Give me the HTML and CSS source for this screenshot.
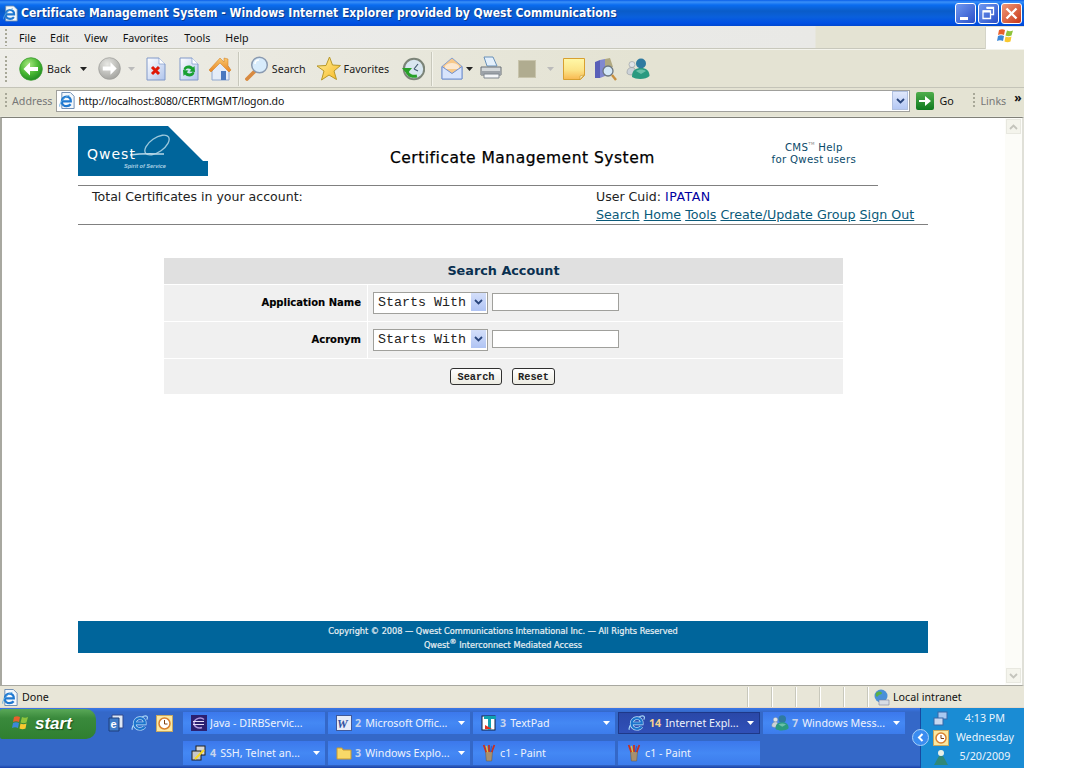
FILE: index.html
```html
<!DOCTYPE html>
<html lang="en">
<head>
<meta charset="utf-8">
<title>Certificate Management System</title>
<link rel="stylesheet" href="styles.css">
</head>
<body>
<svg class="defs" width="0" height="0" aria-hidden="true">
  <defs>
    <radialGradient id="gGreen" cx=".4" cy=".3" r=".8"><stop offset="0" stop-color="#a8e880"/><stop offset=".55" stop-color="#45b530"/><stop offset="1" stop-color="#15801f"/></radialGradient>
    <radialGradient id="gGrey" cx=".4" cy=".3" r=".8"><stop offset="0" stop-color="#e8e8e4"/><stop offset="1" stop-color="#9c9c98"/></radialGradient>
    <linearGradient id="gPage" x1="0" y1="0" x2="1" y2="1"><stop offset="0" stop-color="#fff"/><stop offset="1" stop-color="#b0c4ec"/></linearGradient>
    <linearGradient id="gNote" x1="0" y1="0" x2="0" y2="1"><stop offset="0" stop-color="#fff8a8"/><stop offset=".55" stop-color="#fce488"/><stop offset="1" stop-color="#f8b850"/></linearGradient>
    <linearGradient id="gGo" x1="0" y1="0" x2="0" y2="1"><stop offset="0" stop-color="#4fae4c"/><stop offset="1" stop-color="#0f7a1f"/></linearGradient>
    <linearGradient id="gStar" x1="0" y1="0" x2="1" y2="1"><stop offset="0" stop-color="#fff0a0"/><stop offset="1" stop-color="#f8b820"/></linearGradient>
    <linearGradient id="gRoof" x1="0" y1="0" x2="0" y2="1"><stop offset="0" stop-color="#f8c870"/><stop offset="1" stop-color="#e88420"/></linearGradient>
    <symbol id="ie" viewBox="0 0 20 20">
      <path d="M1.500 17.500C0 14.500 6 5.500 14 2.500c3.500-1.300 5.300.7 3.500 3.700" fill="none" stroke="#a8d8f8" stroke-width="1.300"/>
      <path d="M4.500 10.500h10.800c.2-3.500-2-6-5.300-6-3.300 0-6 2.700-6 6.200s2.700 5.800 6 5.800c2.300 0 4-.9 5-2.500" fill="none" stroke="#c4e6fc" stroke-width="3.900"/>
      <path d="M4.500 10.500h10.800c.2-3.500-2-6-5.300-6-3.300 0-6 2.700-6 6.200s2.700 5.800 6 5.800c2.300 0 4-.9 5-2.500" fill="none" stroke="#1c74cc" stroke-width="2.500"/>
    </symbol>
    <symbol id="iepage" viewBox="0 0 18 18">
      <path d="M3 .5h9l4 4v13H3z" fill="#f4f8fc" stroke="#6888b0"/>
      <path d="M3 10h9.500c.2-3-1.700-5-4.500-5-2.900 0-5 2.300-5 5.200S5.100 15 8 15c2 0 3.300-.7 4.300-2" fill="none" stroke="#1f78d0" stroke-width="2.400"/>
      <path d="M.8 15.500C0 13 4 6 11 3.500" fill="none" stroke="#5ca8e0"/>
    </symbol>
    <symbol id="msgr" viewBox="0 0 24 24">
      <circle cx="6" cy="7.500" r="3" fill="#e0e4e8" stroke="#808890" stroke-width=".5"/><path d="M1 16c0-4 2-5.500 5-5.500 1.500 0 3 1 3 1.500l-3 6c-3 0-5-1-5-2z" fill="#ccd2d8" stroke="#808890" stroke-width=".5"/>
      <circle cx="15" cy="6.500" r="5" fill="#2f7aa0"/><path d="M6 20c0-7 4-9 9-9s8.500 2.500 8.500 8c-3 3.500-13 4-17.500 1z" fill="#2a9a80"/><path d="M10 14c3-2 7-2 10 0l-5 3z" fill="#6ac0a8"/>
    </symbol>
    <symbol id="paint" viewBox="0 0 18 20">
      <path d="M5 8h8l-1 11H6z" fill="#a89070" stroke="#6a5a40" stroke-width=".6"/>
      <path d="M6 9 3 1M9 9V1M12 9l3-8" stroke="#c83020" stroke-width="2"/><path d="M7.500 9 6 2" stroke="#e8c030" stroke-width="1.500"/><path d="M10.500 9 12 2" stroke="#3060c8" stroke-width="1.500"/>
    </symbol>
    <symbol id="arrowDown" viewBox="0 0 7 4"><path d="M0 0h7L3.500 4z" fill="currentColor"/></symbol>
  </defs>
</svg>

<div class="window">
  <header class="titlebar">
    <svg class="title-icon" width="16" height="17"><use href="#iepage"/></svg>
    <h1 class="title-text">Certificate Management System - Windows Internet Explorer provided by Qwest Communications</h1>
    <div class="win-buttons">
      <span class="win-btn"><svg width="21" height="21" viewBox="0 0 21 21"><rect x="5" y="14" width="8" height="3" fill="#fff"/></svg></span>
      <span class="win-btn"><svg width="21" height="21" viewBox="0 0 21 21"><path d="M8.500 4.500h7v7h-2.500M5 8h7.500v7.500H5z" fill="none" stroke="#fff" stroke-width="1.300"/><path d="M8.500 5h7M5 8.500h7.500" stroke="#fff" stroke-width="1.800"/></svg></span>
      <span class="win-btn win-close"><svg width="21" height="21" viewBox="0 0 21 21"><path d="M5.500 5.500l10 10M15.500 5.500l-10 10" stroke="#fff" stroke-width="2.400"/></svg></span>
    </div>
  </header>

  <nav class="menubar">
    <span class="grip"></span>
    <span class="menu-item m-file">File</span>
    <span class="menu-item m-edit">Edit</span>
    <span class="menu-item m-view">View</span>
    <span class="menu-item m-fav">Favorites</span>
    <span class="menu-item m-tools">Tools</span>
    <span class="menu-item">Help</span>
    <span class="flag">
      <svg width="20" height="20" viewBox="0 0 20 20">
        <path d="M3 7c2-1 4-1 6 0l1-5C8 1 6 1 4 2z" fill="#e8602c"/>
        <path d="M10.500 7.500c2 1 4 1 6 0l1.500-5c-2 1-4 1-6 0z" fill="#8fc43c"/>
        <path d="M2 13c2-1 4-1 6 0l1-5C7 7 5 7 3 8z" fill="#3c88d8"/>
        <path d="M9.500 13.500c2 1 4 1 6 0l1-5c-2 1-4 1-6 0z" fill="#f8c830"/>
      </svg>
    </span>
  </nav>

  <div class="toolbar">
    <span class="grip tall"></span>
    <svg class="t-back" width="24" height="24" viewBox="0 0 24 24"><circle cx="12" cy="12" r="11.300" fill="url(#gGreen)" stroke="#3c9a30" stroke-width=".8"/><path d="M4.500 12l6.500-6.500V10h8v4h-8v4.500z" fill="#fff"/></svg>
    <span class="t-label t-l-back">Back</span>
    <svg class="t-drop d-back" width="7" height="4"><use href="#arrowDown"/></svg>
    <svg class="t-fwd" width="23" height="23" viewBox="0 0 24 24"><circle cx="12" cy="12" r="11.300" fill="url(#gGrey)" stroke="#a0a09c" stroke-width=".8"/><path d="M19.500 12 13 5.500V10H5v4h8v4.500z" fill="#fff"/></svg>
    <svg class="t-drop d-fwd off" width="7" height="4"><use href="#arrowDown"/></svg>
    <svg class="t-stop" width="20" height="24" viewBox="0 0 20 24"><path d="M1 1h12l6 6v16H1z" fill="url(#gPage)" stroke="#8098c8"/><path d="M13 1v6h6" fill="#fff" stroke="#8098c8" stroke-width=".7"/><path d="M6 10l7 7M13 10l-7 7" stroke="#e01808" stroke-width="3"/></svg>
    <svg class="t-refresh" width="20" height="24" viewBox="0 0 20 24"><path d="M1 1h12l6 6v16H1z" fill="url(#gPage)" stroke="#8098c8"/><path d="M13 1v6h6" fill="#fff" stroke="#8098c8" stroke-width=".7"/><path d="M4.500 12.500C5 8.500 11 7 14 10.500l1.500-1.500.5 6-5.500-.5 1.700-1.700C10.500 11.300 8 11 6.500 13z" fill="#18a030"/><path d="M15.500 15.500C15 19.500 9 21 6 17.500L4.500 19 4 13l5.500.5-1.700 1.700C9.500 16.700 12 17 13.500 15z" fill="#18a030"/></svg>
    <svg class="t-home" width="24" height="25" viewBox="0 0 24 25"><path d="M4 12v12h17V11L12 4z" fill="#e4ecf8" stroke="#90a8d0"/><rect x="13" y="15" width="5" height="9" fill="#4878c0"/><path d="M1 14 12 2l4 4V2l4 1v7l3 4-2 2L12 7 3 16z" fill="url(#gRoof)" stroke="#d07818" stroke-width=".5"/></svg>
    <span class="t-sep s-1"></span>
    <svg class="t-search" width="24" height="25" viewBox="0 0 24 25"><path d="M9.500 15.500 2 23" stroke="#d88a40" stroke-width="3.800" stroke-linecap="round"/><circle cx="14.500" cy="9" r="7.800" fill="#d8ecfc" stroke="#8a9ab0" stroke-width="1.500"/><path d="M10 8c0-3 2-4 4-4" stroke="#fff" stroke-width="1.500" fill="none"/></svg>
    <span class="t-label t-l-search">Search</span>
    <svg class="t-star" width="25" height="25" viewBox="0 0 25 25"><path d="M13.500 1l3 8 8 .5-6.500 5.500 2.500 8.500-7.500-4.500-7.500 5 2.500-9L1 10l9-.5z" fill="url(#gStar)" stroke="#b89828"/></svg>
    <span class="t-label t-l-fav">Favorites</span>
    <svg class="t-hist" width="24" height="24" viewBox="0 0 24 24"><circle cx="13" cy="12" r="10.200" fill="#d8e6f0" stroke="#7c8478" stroke-width="2"/><path d="M13 12l4-5M13 12l4 2" stroke="#405870" stroke-width="1.200" fill="none"/><path d="M1 11h10l-5 6z" fill="#28a028"/><path d="M6 14c1 5 6 6 10 5" stroke="#28a028" stroke-width="3" fill="none"/></svg>
    <span class="t-sep s-2"></span>
    <svg class="t-mail" width="22" height="23" viewBox="0 0 22 23"><path d="M1 9.500 11 1l10 8.500V22H1z" fill="#f8c888" stroke="#88a0d0"/><path d="M4 9c3-4 11-4 14 0v3H4z" fill="#fce8d0"/><path d="M1 22V9.500l10 7 10-7V22z" fill="#d8e4fc" stroke="#7090d0"/></svg>
    <svg class="t-drop d-mail" width="7" height="4"><use href="#arrowDown"/></svg>
    <svg class="t-print" width="24" height="25" viewBox="0 0 24 25"><path d="M5 1h9l4 9H8z" fill="#e4f0fc" stroke="#6890b8"/><path d="M2 11h20v8H2z" fill="#d4d8da" stroke="#686e74"/><path d="M2 15h20v4H2z" fill="#9ca2a8"/><path d="M5 18h15v4H5z" fill="#f4f6f8" stroke="#808890"/></svg>
    <span class="t-square"></span>
    <svg class="t-drop d-square off" width="7" height="4"><use href="#arrowDown"/></svg>
    <svg class="t-note" width="22" height="22" viewBox="0 0 22 22"><path d="M.5.500h21v17l-4 4H.5z" fill="url(#gNote)" stroke="#d8a030"/><path d="M21 17l-4 1v3.500z" fill="#f8f0c0" stroke="#c89830" stroke-width=".6"/></svg>
    <svg class="t-research" width="23" height="24" viewBox="0 0 23 24"><path d="M1 5l5-2v18H1z" fill="#5a60b8"/><path d="M6 3l5-1v17l-5 2z" fill="#8088d0"/><path d="M11 2l5-1 3 9h-8z" fill="#b0a880"/><circle cx="14" cy="14" r="5" fill="#d4e8f8" stroke="#6c7680" stroke-width="1.300"/><path d="m18 18 4 5" stroke="#c89040" stroke-width="2.400"/></svg>
    <svg class="t-msgr" width="24" height="24"><use href="#msgr"/></svg>
  </div>

  <div class="addressbar">
    <span class="grip short"></span>
    <span class="addr-label">Address</span>
    <div class="addr-field">
      <svg width="17" height="17"><use href="#iepage"/></svg>
      <span class="addr-url">http://localhost:8080/CERTMGMT/logon.do</span>
      <span class="addr-drop"><svg width="9" height="6" viewBox="0 0 9 6"><path d="M1 1l3.500 3.500L8 1" fill="none" stroke="#29457c" stroke-width="1.800"/></svg></span>
    </div>
    <svg class="go-icon" width="18" height="18" viewBox="0 0 18 18"><rect width="18" height="18" rx="2" fill="url(#gGo)"/><path d="M3 8h6V4l6 5-6 5v-4H3z" fill="#fff"/></svg>
    <span class="go-label">Go</span>
    <span class="grip short g-links"></span>
    <span class="links-label">Links</span>
    <span class="chevrons">»</span>
  </div>

  <div class="viewport-wrap">
    <main class="viewport">
      <div class="page">
        <div class="head">
          <div class="logo">
            <svg width="130" height="50" viewBox="0 0 130 50">
              <path d="M0 0h90l35 35h5v15H0z" fill="#00659b"/>
              <ellipse cx="79" cy="19" rx="14" ry="7" transform="rotate(-35 79 19)" fill="none" stroke="#9cc8dc" stroke-width="1.300"/>
              <path d="M52 29c14-2 24-1 34-1" stroke="#b8d8e8" stroke-width="1.500" fill="none"/>
              <text x="9" y="33" class="logo-name">Qwest</text>
              <text x="46" y="42" class="logo-tag">Spirit of Service</text>
            </svg>
          </div>
          <h2 class="app-title">Certificate Management System</h2>
          <div class="help-link">CMS<sup class="tm">TM</sup> Help<br>for Qwest users</div>
        </div>
        <hr class="rule rule-short">
        <div class="info">
          <div class="info-left">Total Certificates in your account:</div>
          <div class="info-right">
            <div class="user-line">User Cuid: <span class="user-id">IPATAN</span></div>
            <div class="nav-links"><a href="#">Search</a> <a href="#">Home</a> <a href="#">Tools</a> <a href="#">Create/Update Group</a> <a href="#">Sign Out</a></div>
          </div>
        </div>
        <hr class="rule rule-long">

        <form class="search">
          <div class="search-title"><span>Search Account</span></div>
          <div class="search-row">
            <label class="row-label">Application Name</label>
            <div class="row-fields">
              <span class="sel"><select><option>Starts With</option></select><span class="sel-arrow"><svg width="9" height="6" viewBox="0 0 9 6"><path d="M1 1l3.500 3.500L8 1" fill="none" stroke="#29457c" stroke-width="1.800"/></svg></span></span>
              <input type="text">
            </div>
          </div>
          <div class="search-row">
            <label class="row-label">Acronym</label>
            <div class="row-fields">
              <span class="sel"><select><option>Starts With</option></select><span class="sel-arrow"><svg width="9" height="6" viewBox="0 0 9 6"><path d="M1 1l3.500 3.500L8 1" fill="none" stroke="#29457c" stroke-width="1.800"/></svg></span></span>
              <input type="text">
            </div>
          </div>
          <div class="search-actions">
            <button type="button" class="btn-search">Search</button>
            <button type="button" class="btn-reset">Reset</button>
          </div>
        </form>

        <footer class="foot">
          <div>Copyright © 2008 — Qwest Communications International Inc. — All Rights Reserved</div>
          <div>Qwest<sup>®</sup> Interconnect Mediated Access</div>
        </footer>
      </div>
    </main>
    <div class="scrollbar">
      <span class="sb-btn"><svg width="9" height="6" viewBox="0 0 9 6"><path d="M1 5l3.500-3.500L8 5" fill="none" stroke="#c4c4bc" stroke-width="1.800"/></svg></span>
      <span class="sb-btn"><svg width="9" height="6" viewBox="0 0 9 6"><path d="M1 1l3.500 3.500L8 1" fill="none" stroke="#c4c4bc" stroke-width="1.800"/></svg></span>
    </div>
  </div>

  <div class="statusbar">
    <svg width="17" height="17"><use href="#iepage"/></svg>
    <span class="status-text">Done</span>
    <span class="pane p1"></span><span class="pane"></span><span class="pane"></span><span class="pane"></span><span class="pane"></span>
    <span class="pane zone">
      <svg width="17" height="17" viewBox="0 0 17 17"><circle cx="8" cy="7" r="6.500" fill="#4a90d8"/><path d="M3 4c2-2 5-2 6 0 0 2-3 1-4 3S2 7 3 4z" fill="#58b048"/><path d="M6 11h10v5H6z" fill="#d8dce4" stroke="#7880a0" stroke-width=".6"/></svg>
      <span>Local intranet</span>
    </span>
  </div>

  <div class="taskbar">
    <div class="start">
      <svg width="20" height="20" viewBox="0 0 20 20">
        <path d="M2 8c2-1 4-1 6 0l1-5C7 2 5 2 3 3z" fill="#e8602c"/>
        <path d="M9.500 8.500c2 1 4 1 6 0L17 3c-2 1-4 1-6 0z" fill="#8fc43c"/>
        <path d="M1 14c2-1 4-1 6 0l1-5C6 8 4 8 2 9z" fill="#3c88d8"/>
        <path d="M8.500 14.500c2 1 4 1 6 0l1-5c-2 1-4 1-6 0z" fill="#f8c830"/>
      </svg>
      <span class="start-text">start</span>
    </div>
    <div class="quick">
      <svg width="16" height="18" viewBox="0 0 16 18"><path d="M4 1h11v13H4z" fill="#dfe8f4" stroke="#30488c"/><path d="M1 4h10v13H1z" fill="#3f7cc8" stroke="#1f3f7c"/><text x="2.500" y="14" class="q-e">e</text></svg>
      <svg width="18" height="18"><use href="#ie"/></svg>
      <svg width="17" height="17" viewBox="0 0 17 17"><rect x=".5" y=".5" width="16" height="16" fill="#fce8a0" stroke="#c8a860"/><circle cx="8.500" cy="8.500" r="5.500" fill="#fff" stroke="#d88030" stroke-width="1.500"/><path d="M8.500 5v4h3" stroke="#804010" fill="none"/></svg>
    </div>
    <div class="tasks">
      <div class="task">
        <svg width="16" height="16" viewBox="0 0 16 16"><rect width="16" height="16" fill="#2c2070"/><path d="M13 4.500C10 2 4 3 3 7.500c-.5 4 4 6.500 8 5" fill="none" stroke="#b098e0" stroke-width="1.500"/><path d="M2 6.500h11M2 9.500h11" stroke="#e8e0f8"/></svg>
        <span class="task-text">Java - DIRBServic...</span>
      </div>
      <div class="task">
        <svg width="16" height="16" viewBox="0 0 16 16"><rect x=".5" y=".5" width="15" height="15" fill="#e8ecf8" stroke="#405898"/><text x="1" y="13" class="w-letter">W</text></svg>
        <span class="task-num">2</span><span class="task-text">Microsoft Offic...</span><svg class="task-drop" width="7" height="4"><use href="#arrowDown"/></svg>
      </div>
      <div class="task">
        <svg width="16" height="16" viewBox="0 0 16 16"><rect x="1" y="1" width="13" height="14" fill="#fff" stroke="#102040"/><path d="M3 1h12v3H10v11H7V4H3z" fill="#10a0b0"/><path d="M4 10l7 4H4z" fill="#e03020"/></svg>
        <span class="task-num">3</span><span class="task-text">TextPad</span><svg class="task-drop" width="7" height="4"><use href="#arrowDown"/></svg>
      </div>
      <div class="task active">
        <svg width="18" height="18"><use href="#ie"/></svg>
        <span class="task-num hot">14</span><span class="task-text">Internet Expl...</span><svg class="task-drop" width="7" height="4"><use href="#arrowDown"/></svg>
      </div>
      <div class="task">
        <svg width="18" height="18"><use href="#msgr"/></svg>
        <span class="task-num">7</span><span class="task-text">Windows Mess...</span><svg class="task-drop" width="7" height="4"><use href="#arrowDown"/></svg>
      </div>
      <div class="task">
        <svg width="16" height="16" viewBox="0 0 16 16"><rect x="5" y="1" width="9" height="9" fill="#d8d8d8" stroke="#202020"/><rect x="1" y="6" width="9" height="9" fill="#c8c8c8" stroke="#202020"/><path d="M4 14 13 5" stroke="#f8d820" stroke-width="2"/></svg>
        <span class="task-num">4</span><span class="task-text">SSH, Telnet an...</span><svg class="task-drop" width="7" height="4"><use href="#arrowDown"/></svg>
      </div>
      <div class="task">
        <svg width="16" height="14" viewBox="0 0 16 14"><path d="M1 2h5l1 2h8v9H1z" fill="#f8d868" stroke="#c89830"/></svg>
        <span class="task-num">3</span><span class="task-text">Windows Explo...</span><svg class="task-drop" width="7" height="4"><use href="#arrowDown"/></svg>
      </div>
      <div class="task">
        <svg width="16" height="18"><use href="#paint"/></svg>
        <span class="task-text">c1 - Paint</span>
      </div>
      <div class="task">
        <svg width="16" height="18"><use href="#paint"/></svg>
        <span class="task-text">c1 - Paint</span>
      </div>
    </div>
    <div class="tray">
      <span class="tray-chevron"><svg width="9" height="9" viewBox="0 0 9 9"><path d="M6.500 1 3 4.500 6.500 8" fill="none" stroke="#fff" stroke-width="2"/></svg></span>
      <div class="tray-icons">
        <svg width="16" height="16" viewBox="0 0 16 16"><rect x="5" y="1" width="9" height="7" fill="#a8c8f0" stroke="#3868a8"/><rect x="1" y="7" width="9" height="7" fill="#c8d8f0" stroke="#3868a8"/></svg>
        <svg width="16" height="16" viewBox="0 0 16 16"><rect x=".5" y=".5" width="15" height="15" fill="#fce8a0" stroke="#c8a860"/><circle cx="8" cy="8" r="5" fill="#fff" stroke="#d88030" stroke-width="1.500"/><path d="M8 5v3.500h3" stroke="#804010" fill="none"/></svg>
        <svg width="16" height="16" viewBox="0 0 16 16"><circle cx="8" cy="4" r="3" fill="#e8f0e8"/><path d="M1 16 6 7h4l5 9z" fill="#308878"/></svg>
      </div>
      <div class="tray-clock">
        <span>4:13 PM</span>
        <span>Wednesday</span>
        <span>5/20/2009</span>
      </div>
    </div>
  </div>
</div>
</body>
</html>
```
FILE: styles.css
```css
* { box-sizing: border-box; }
html, body { margin: 0; padding: 0; background: #fff; }
body { width: 1076px; height: 768px; overflow: hidden; font-family: "Noto Sans", "Liberation Sans", sans-serif; }
.defs { display: block; height: 0; }
.window { width: 1024px; height: 768px; display: flex; flex-direction: column; background: #e6e4d6; }

/* Title bar */
.titlebar {
  height: 26px; display: flex; align-items: center; padding: 0 2px 0 3px;
  background: linear-gradient(180deg, #0a5ee8 0, #3a90f8 2px, #0a6cf0 5px, #0a5cc8 11px, #0a60dc 17px, #0050e4 23px, #0048d0 26px);
}
.title-icon { flex: none; }
.title-text { margin: 0 0 0 2px; font: 700 12px "DejaVu Sans Condensed", "DejaVu Sans", sans-serif; font-stretch: condensed; letter-spacing: .02px; color: #fff; text-shadow: 1px 1px 0 #0a3a90; white-space: nowrap; flex: 1; }
.win-buttons { display: flex; gap: 2px; }
.win-btn { width: 21px; height: 21px; border: 1px solid #fff; border-radius: 3px; background: linear-gradient(135deg, #7098f0, #2a50c8); display: flex; align-items: center; justify-content: center; }
.win-btn svg { margin: -1px; flex: none; }
.win-close { background: linear-gradient(135deg, #f09878, #c83818); }

/* Menu bar */
.menubar {
  height: 23px; display: flex; align-items: center; font-size: 10.700px; color: #111;
  background: linear-gradient(90deg, #ececea 0, #e9e9e6 815px, #e4e3d3 816px);
  border-bottom: 1px solid #c8c8bc; padding-left: 5px; padding-top: 1px;
}
.grip { width: 2px; height: 17px; margin-right: 12px; background: repeating-linear-gradient(180deg, #a8a898 0 2px, transparent 2px 4px); flex: none; }
.grip.tall { height: 26px; margin-right: 12px; }
.grip.short { height: 16px; margin-right: 5px; }
.menu-item { margin-right: 15px; }
.m-file { margin-right: 14px; }
.m-edit { margin-right: 15px; }
.m-view { margin-right: 15px; }
.m-fav { margin-right: 16px; }
.flag { margin-left: auto; width: 39px; height: 22px; background: #fff; border-left: 1px solid #d4d4c8; display: flex; align-items: center; justify-content: center; }

/* Toolbar */
.toolbar { height: 39px; display: flex; align-items: center; font-size: 10.700px; color: #222; background: linear-gradient(90deg, #eeede8 0, #e8e7dc 400px, #e4e3d3 640px); border-top: 1px solid #f4f4ec; border-bottom: 1px solid #c4c4b8; padding-left: 5px; }
.toolbar > svg { flex: none; }
.t-label { white-space: nowrap; }
.t-l-back { margin-left: 4px; }
.t-drop { color: #222; }
.t-drop.off { color: #bbb; }
.d-back { margin-left: 9px; }
.t-fwd { margin-left: 11px; }
.d-fwd { margin-left: 7px; }
.t-stop { margin-left: 11px; }
.t-refresh { margin-left: 13px; }
.t-home { margin-left: 9px; }
.t-sep { width: 1px; height: 34px; background: #c8c8bc; box-shadow: 1px 0 0 #f4f4ec; flex: none; }
.s-1 { margin-left: 6px; }
.t-search { margin-left: 6px; }
.t-l-search { margin-left: 3px; }
.t-star { margin-left: 10px; }
.t-l-fav { margin-left: 3px; }
.t-hist { margin-left: 12px; }
.s-2 { margin-left: 6px; }
.t-mail { margin-left: 9px; }
.d-mail { margin-left: 3px; }
.t-print { margin-left: 6px; }
.t-square { width: 18px; height: 18px; margin-left: 15px; background: #b0ac90; border: 1px solid #c8c4ac; flex: none; }
.d-square { margin-left: 11px; }
.t-note { margin-left: 9px; }
.t-research { margin-left: 9px; }
.t-msgr { margin-left: 9px; }

/* Address bar */
.addressbar { height: 29px; display: flex; align-items: center; font-size: 10.700px; background: #e4e3d3; padding: 0 0 3px 5px; border-bottom: 1px solid #e8e8dc; }
.addr-label { color: #777; margin-right: 4px; }
.addr-field { width: 854px; height: 22px; display: flex; align-items: center; background: #fff; border: 1px solid #a0a09c; padding-left: 2px; color: #111; }
.addr-field > svg { flex: none; }
.addr-url { margin-left: 2px; flex: 1; font-size: 10.500px; letter-spacing: -.15px; }
.addr-drop { width: 16px; height: 19px; margin-right: 1px; background: linear-gradient(180deg, #e0e8fc, #b4c8f4); border: 1px solid #b0c0e0; display: flex; align-items: center; justify-content: center; }
.go-icon { margin-left: 6px; flex: none; }
.go-label { margin-left: 5px; width: 34px; color: #111; }
.g-links { margin-right: 5px; }
.links-label { color: #777; }
.chevrons { margin-left: 8px; margin-top: -6px; font-size: 12px; font-weight: 700; color: #111; }

/* Viewport */
.viewport-wrap { height: 569px; display: flex; background: #fff; border-top: 1px solid #808078; border-left: 2px solid #a8a8a0; border-right: 2px solid #e0e0d8; border-bottom: 1px solid #a8a8a0; }
.viewport { width: 1003px; height: 100%; }
.page { width: 926px; padding: 8px 0 0 76px; }
.head { width: 850px; height: 50px; display: flex; align-items: center; }
.logo { width: 130px; height: 50px; flex: none; }
.logo svg { display: block; }
.logo-name { font: 400 14px "DejaVu Sans", sans-serif; letter-spacing: 1px; fill: #fff; }
.logo-tag { font: italic 700 5.500px "Liberation Sans", sans-serif; fill: #a8d0e4; }
.app-title { margin: 13px 0 0 182px; font: 400 15.500px "DejaVu Sans", sans-serif; letter-spacing: .5px; -webkit-text-stroke: .25px #000; color: #000; white-space: nowrap; flex: none; }
.help-link { margin: 5px 0 0 116px; width: 86px; text-align: center; font: 400 10.200px/12px "DejaVu Sans", sans-serif; letter-spacing: .3px; color: #0a4a6a; white-space: nowrap; flex: none; }
.tm { font-size: 4px; vertical-align: 6px; line-height: 0; color: #888; }
.rule { border: 0; height: 1px; margin: 0; background: #808080; }
.rule-short { width: 800px; margin-top: 9px; }
.rule-long { width: 850px; }
.info { width: 850px; height: 38px; display: flex; font: 400 12.550px "DejaVu Sans", sans-serif; color: #222; }
.info-left { margin: 3px 0 0 14px; width: 504px; }
.info-right { padding-top: 3px; white-space: nowrap; }
.user-id { color: #0000a0; letter-spacing: .5px; }
.nav-links { margin-top: 3px; font-size: 12.700px; }
.nav-links a { color: #0a5a7a; }

/* Search form */
.search { width: 679px; margin: 33px 0 0 86px; font-family: "DejaVu Sans", sans-serif; }
.search-title { height: 26px; background: #e0e0e0; text-align: center; font-size: 12.800px; font-weight: 700; line-height: 26px; color: #0a3050; }
.search-row { height: 36px; display: flex; margin-top: 1px; }
.row-label { width: 203px; height: 36px; margin-right: 1px; background: #f0f0f0; padding-right: 6px; text-align: right; font-size: 10px; font-weight: 700; line-height: 36px; color: #000; -webkit-text-stroke: .15px #000; }
.row-fields { flex: 1; height: 36px; background: #f0f0f0; display: flex; align-items: center; padding: 0 0 2px 5px; gap: 4px; }
.sel { position: relative; width: 115px; height: 22px; display: block; }
.sel select { width: 115px; height: 22px; appearance: none; border: 1px solid #a0a09c; border-radius: 0; background: #fff; padding: 0 0 0 4px; font: 400 13.330px "Liberation Mono", monospace; color: #222; }
.sel-arrow { position: absolute; top: 2px; right: 2px; width: 15px; height: 18px; background: linear-gradient(180deg, #d4dffa, #b0c4f4); display: flex; align-items: center; justify-content: center; }
.row-fields input { width: 127px; height: 18px; border: 1px solid #a0a09c; background: #fff; padding: 0; }
.search-actions { height: 35px; margin-top: 1px; background: #f0f0f0; display: flex; align-items: center; padding-left: 286px; gap: 10px; }
.search-actions button { height: 17px; padding: 0; border: 1px solid #303030; border-radius: 3px; background: linear-gradient(180deg, #fff, #ecebe2); font: 700 10.300px "Liberation Mono", monospace; color: #222; }
.btn-search { width: 52px; }
.btn-reset { width: 43px; }

/* Footer */
.foot { width: 850px; height: 32px; margin-top: 227px; background: #00659b; color: #e8f0f4; text-align: center; font: 400 8.200px/14px "DejaVu Sans", sans-serif; -webkit-text-stroke: .2px #e8f0f4; padding-top: 3px; }
.foot sup { font-size: 7px; line-height: 0; }

/* Scrollbar */
.scrollbar { flex: 1; display: flex; flex-direction: column; justify-content: space-between; padding: 1px 1px 2px 1px; background: #fcfcf8; }
.sb-btn { height: 15px; width: 15px; background: #f4f4ec; border: 1px solid #e8e8e0; display: flex; align-items: center; justify-content: center; }

/* Status bar */
.statusbar { height: 22px; display: flex; align-items: center; font-size: 10.700px; color: #111; background: #e8e6d8; border-bottom: 1px solid #e8d8c8; padding: 1px 0 0 2px; }
.status-text { margin-left: 3px; width: 726px; }
.pane { width: 24px; height: 20px; border-left: 1px solid #fff; box-shadow: -1px 0 0 #c8c8bc; flex: none; }
.zone { width: auto; flex: 1; display: flex; align-items: center; padding-left: 4px; gap: 3px; }

/* Taskbar */
.taskbar { position: relative; height: 60px; width: 1024px; display: flex; background: linear-gradient(180deg, #3a78e8 0, #3468c8 4px, #3468c8 57px, #1840a8 60px); }
.start { width: 96px; height: 30px; margin-top: 1px; display: flex; align-items: center; gap: 4px; padding-left: 11px; background: linear-gradient(180deg, #5aa858, #3a8a3c 30%, #2f7f30); border-radius: 2px 10px 10px 2px; }
.start-text { font: italic 700 17px "Liberation Sans", sans-serif; color: #fff; text-shadow: 1px 1px 1px #174a18; }
.quick { width: 87px; height: 30px; display: flex; align-items: center; gap: 7px; padding-left: 12px; flex: none; }
.q-e { font: 700 11px "Liberation Sans", sans-serif; fill: #fff; }
.w-letter { font: italic 700 12px "Liberation Serif", serif; fill: #3050a0; }
.tasks { width: 722px; display: grid; grid-template-columns: repeat(5, 142px); grid-template-rows: 22px 24px; column-gap: 3px; row-gap: 7px; padding-top: 4px; flex: none; align-content: start; }
.task { display: flex; align-items: center; padding: 0 5px 0 8px; background: linear-gradient(180deg, #3c78ec, #4488f4 50%, #3c7cec); font-size: 10.700px; color: #eef2fc; white-space: nowrap; }
.task > svg:first-child { flex: none; margin-right: 3px; }
.task-num { font-weight: 700; margin-right: 4px; color: #c8d4ec; }
.task-num.hot { color: #f4d090; }
.task-text { flex: 1; overflow: hidden; }
.task-drop { flex: none; color: #fff; }
.active { background: linear-gradient(180deg, #2a48a8, #3050b8); border: 1px solid #1e3888; padding-left: 9px; }
.tray { position: relative; margin-left: 15px; width: 104px; display: flex; background: #1a8cd4; border-left: 1px solid #1848a0; color: #eaf4fc; font-size: 10.700px; }
.tray-chevron { position: absolute; left: -9px; top: 21px; width: 17px; height: 17px; border-radius: 50%; background: #3a8cf0; border: 1px solid #a8d0f8; display: flex; align-items: center; justify-content: center; }
.tray-icons { width: 36px; display: flex; flex-direction: column; align-items: center; padding: 3px 0 0 5px; gap: 3px; }
.tray-clock { flex: 1; display: flex; flex-direction: column; align-items: center; gap: 4px; padding: 3px 10px 0 0; line-height: 15px; }
```
